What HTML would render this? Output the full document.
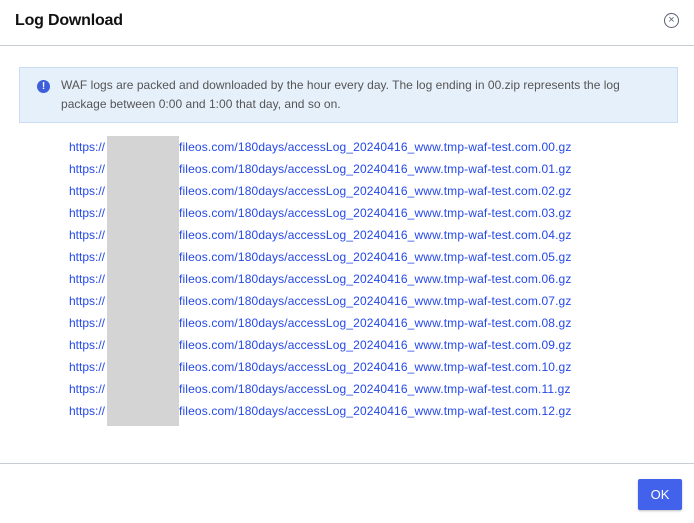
<!DOCTYPE html>
<html><head><style>
body{margin:0;width:694px;height:523px;background:#fff;font-family:"Liberation Sans",Arial,sans-serif;position:relative;overflow:hidden}
.t{position:absolute;left:15px;top:12px;font-size:16px;color:#111;font-weight:bold;letter-spacing:-0.2px}
.x{position:absolute;left:664px;top:13px;width:15px;height:15px;border:1.5px solid #5a6072;border-radius:50%;box-sizing:border-box;color:#5a6072;font-size:11px;line-height:12px;text-align:center}
.hl{position:absolute;left:0;top:45px;width:694px;height:1px;background:#c8ccd6}
.info{position:absolute;left:19px;top:67px;width:659px;height:56px;background:#e6f0fb;border:1px solid #c9dcf3;box-sizing:border-box}
.ic{position:absolute;left:17px;top:12px;width:13px;height:13px;border-radius:50%;background:#3d5fd9;color:#fff;font-size:10px;font-weight:bold;line-height:13px;text-align:center}
.it{position:absolute;left:41px;top:8px;font-size:12px;line-height:19px;color:#555;letter-spacing:0.02px}
.l{position:absolute;left:69px;font-size:12px;color:#2448e8}
.r{position:absolute;left:179px;font-size:12px;color:#2448e8;letter-spacing:0.14px}
.g{position:absolute;left:107px;top:136px;width:72px;height:290px;background:#d4d4d4}
.fl{position:absolute;left:0;top:463px;width:694px;height:1px;background:#c8ccd6}
.ok{position:absolute;left:638px;top:479px;width:44px;height:31px;background:#4262ec;border-radius:2px;color:#fff;font-size:13px;line-height:31px;text-align:center;box-shadow:0 1px 2px rgba(0,0,0,.25)}
</style></head><body>
<div class="t">Log Download</div>
<div class="x">×</div>
<div class="hl"></div>
<div class="info"><div class="ic">!</div><div class="it">WAF logs are packed and downloaded by the hour every day. The log ending in 00.zip represents the log<br>package between 0:00 and 1:00 that day, and so on.</div></div>
<div class="l" style="top:140px">https://</div><div class="r" style="top:140px">fileos.com/180days/accessLog_20240416_www.tmp-waf-test.com.00.gz</div>
<div class="l" style="top:162px">https://</div><div class="r" style="top:162px">fileos.com/180days/accessLog_20240416_www.tmp-waf-test.com.01.gz</div>
<div class="l" style="top:184px">https://</div><div class="r" style="top:184px">fileos.com/180days/accessLog_20240416_www.tmp-waf-test.com.02.gz</div>
<div class="l" style="top:206px">https://</div><div class="r" style="top:206px">fileos.com/180days/accessLog_20240416_www.tmp-waf-test.com.03.gz</div>
<div class="l" style="top:228px">https://</div><div class="r" style="top:228px">fileos.com/180days/accessLog_20240416_www.tmp-waf-test.com.04.gz</div>
<div class="l" style="top:250px">https://</div><div class="r" style="top:250px">fileos.com/180days/accessLog_20240416_www.tmp-waf-test.com.05.gz</div>
<div class="l" style="top:272px">https://</div><div class="r" style="top:272px">fileos.com/180days/accessLog_20240416_www.tmp-waf-test.com.06.gz</div>
<div class="l" style="top:294px">https://</div><div class="r" style="top:294px">fileos.com/180days/accessLog_20240416_www.tmp-waf-test.com.07.gz</div>
<div class="l" style="top:316px">https://</div><div class="r" style="top:316px">fileos.com/180days/accessLog_20240416_www.tmp-waf-test.com.08.gz</div>
<div class="l" style="top:338px">https://</div><div class="r" style="top:338px">fileos.com/180days/accessLog_20240416_www.tmp-waf-test.com.09.gz</div>
<div class="l" style="top:360px">https://</div><div class="r" style="top:360px">fileos.com/180days/accessLog_20240416_www.tmp-waf-test.com.10.gz</div>
<div class="l" style="top:382px">https://</div><div class="r" style="top:382px">fileos.com/180days/accessLog_20240416_www.tmp-waf-test.com.11.gz</div>
<div class="l" style="top:404px">https://</div><div class="r" style="top:404px">fileos.com/180days/accessLog_20240416_www.tmp-waf-test.com.12.gz</div>
<div class="g"></div>
<div class="fl"></div>
<div class="ok">OK</div>
</body></html>
